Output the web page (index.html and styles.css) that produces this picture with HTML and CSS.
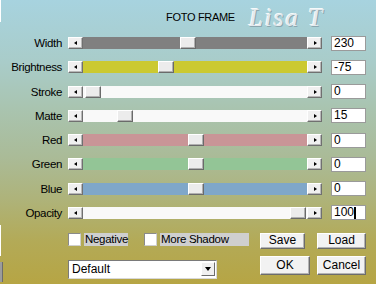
FILE: index.html
```html
<!DOCTYPE html>
<html>
<head>
<meta charset="utf-8">
<link rel="stylesheet" href="styles.css">
</head>
<body>
<div class="dialog">
  <div class="edge edge-top"></div>
  <div class="edge edge-bottom"></div>
  <div class="edge edge-box"></div>
  <header class="titlebar">
    <span class="title">FOTO FRAME</span>
    <span class="logo">Lisa T</span>
  </header>
  <section class="rows">
    <div class="row"><label class="lbl">Width</label>
      <div class="slider"><span class="sbtn left"></span><div class="track t-gray"><span class="thumb" style="left:97px"></span></div><span class="sbtn right"></span></div>
      <div class="val">230</div></div>
    <div class="row"><label class="lbl">Brightness</label>
      <div class="slider"><span class="sbtn left"></span><div class="track t-yellow"><span class="thumb" style="left:75px"></span></div><span class="sbtn right"></span></div>
      <div class="val">-75</div></div>
    <div class="row"><label class="lbl">Stroke</label>
      <div class="slider"><span class="sbtn left"></span><div class="track t-white"><span class="thumb" style="left:2px"></span></div><span class="sbtn right"></span></div>
      <div class="val">0</div></div>
    <div class="row"><label class="lbl">Matte</label>
      <div class="slider"><span class="sbtn left"></span><div class="track t-white"><span class="thumb" style="left:34px"></span></div><span class="sbtn right"></span></div>
      <div class="val">15</div></div>
    <div class="row"><label class="lbl">Red</label>
      <div class="slider"><span class="sbtn left"></span><div class="track t-red"><span class="thumb" style="left:105px"></span></div><span class="sbtn right"></span></div>
      <div class="val">0</div></div>
    <div class="row"><label class="lbl">Green</label>
      <div class="slider"><span class="sbtn left"></span><div class="track t-green"><span class="thumb" style="left:105px"></span></div><span class="sbtn right"></span></div>
      <div class="val">0</div></div>
    <div class="row"><label class="lbl">Blue</label>
      <div class="slider"><span class="sbtn left"></span><div class="track t-blue"><span class="thumb" style="left:105px"></span></div><span class="sbtn right"></span></div>
      <div class="val">0</div></div>
    <div class="row"><label class="lbl">Opacity</label>
      <div class="slider"><span class="sbtn left"></span><div class="track t-white"><span class="thumb" style="left:207px"></span></div><span class="sbtn right"></span></div>
      <div class="val">100<span class="caret"></span></div></div>
  </section>
  <section class="bottom">
    <div class="brow">
      <div class="checks">
        <span class="chk"></span><span class="clabel neg">Negative</span>
        <span class="chk chk2"></span><span class="clabel more">More Shadow</span>
      </div>
      <div class="btns">
        <button class="btn save">Save</button>
        <button class="btn load">Load</button>
      </div>
    </div>
    <div class="brow brow2">
      <div class="combo"><span class="ctext">Default</span><span class="cbtn"></span></div>
      <div class="btns">
        <button class="btn big ok">OK</button>
        <button class="btn big cancel">Cancel</button>
      </div>
    </div>
  </section>
</div>
</body>
</html>
```
FILE: styles.css
```css
* { box-sizing: border-box; }
html, body { margin: 0; padding: 0; }
body {
  width: 376px;
  height: 284px;
  overflow: hidden;
  font-family: "Liberation Sans", Arial, sans-serif;
  font-size: 11.5px;
  color: #000;
}
.dialog {
  position: relative;
  width: 376px;
  height: 284px;
  background: linear-gradient(180deg, #a7d3df 0%, #a9ccc9 22%, #a9c4b0 38%, #aabb98 55%, #aeb37a 70%, #b3aa57 85%, #b6a544 100%);
}
.edge { position: absolute; left: 0; }
.edge-top { top: 0; width: 1px; height: 22px; background: #ffffff; }
.edge-bottom { top: 225px; width: 1px; height: 31px; background: #ffffff; }
.edge-box { top: 262px; width: 3px; height: 20px; background: #9c9c9c; border-right: 1px solid #6c6c6c; }

.titlebar {
  height: 36px;
  display: flex;
  align-items: flex-start;
  padding-left: 166px;
}
.title {
  margin-top: 11px;
  font-size: 11px;
  letter-spacing: -0.3px;
  line-height: 13px;
}
.logo {
  margin-left: 14px;
  margin-top: 5px;
  font-family: "Liberation Serif", serif;
  font-style: italic;
  font-size: 25px;
  line-height: 25px;
  letter-spacing: 2px;
  color: #e4eaee;
  text-shadow: 1px 1px 0 #8aa6ae, -1px -1px 0 #f6fafb;
}

.rows {
  display: flex;
  flex-direction: column;
  gap: 10.29px;
}
.row {
  display: flex;
  align-items: center;
  height: 14px;
}
.lbl {
  width: 62px;
  text-align: right;
  margin-right: 6px;
  line-height: 14px;
  letter-spacing: -0.35px;
}
.slider {
  display: flex;
  width: 254px;
  height: 12px;
}
.sbtn {
  position: relative;
  width: 15px;
  height: 12px;
  background: #f0f0f0;
  border-top: 1px solid #ffffff;
  border-left: 1px solid #ffffff;
  border-right: 1px solid #707070;
  border-bottom: 1px solid #707070;
  box-shadow: inset -1px -1px 0 #b8b8b8;
  flex: none;
}
.sbtn::after {
  content: "";
  position: absolute;
  top: 3px;
  width: 0;
  height: 0;
  border-top: 2.5px solid transparent;
  border-bottom: 2.5px solid transparent;
}
.sbtn.left::after { left: 5px; border-right: 3px solid #000; }
.sbtn.right::after { left: 6px; border-left: 3px solid #000; }
.track {
  position: relative;
  flex: 1;
  height: 12px;
}
.t-gray { background: #808080; }
.t-yellow { background: #cbc931; }
.t-white { background: #f9f9f9; }
.t-red { background: #c99597; }
.t-green { background: #93c596; }
.t-blue { background: #7fa7c9; }
.thumb {
  position: absolute;
  top: 0;
  width: 16px;
  height: 12px;
  background: #ececec;
  border-top: 1px solid #ffffff;
  border-left: 1px solid #ffffff;
  border-right: 1px solid #6a6a6a;
  border-bottom: 1px solid #6a6a6a;
  box-shadow: inset -1px -1px 0 #b0b0b0;
}
.val {
  margin-left: 9px;
  width: 35px;
  height: 15px;
  background: #ffffff;
  border: 1px solid #9a9a9a;
  padding-left: 2px;
  line-height: 13px;
  font-size: 12px;
  display: flex;
  align-items: center;
}
.caret {
  display: inline-block;
  width: 2px;
  height: 12px;
  background: #000;
}

.bottom {
  margin-top: 13px;
  padding-left: 68px;
  display: flex;
  flex-direction: column;
  gap: 7px;
}
.brow {
  display: flex;
  align-items: flex-start;
  height: 16px;
}
.brow2 { height: 19px; }
.checks {
  display: flex;
  align-items: center;
  width: 192px;
  height: 13px;
}
.chk {
  width: 13px;
  height: 13px;
  background: #ffffff;
  border-top: 1px solid #8a8a8a;
  border-left: 1px solid #8a8a8a;
  border-right: 1px solid #d0d0d0;
  border-bottom: 1px solid #d0d0d0;
  flex: none;
}
.chk2 { margin-left: 16px; }
.clabel {
  margin-left: 3px;
  height: 13px;
  line-height: 13px;
  background: #cfcfcf;
  padding-left: 1px;
  letter-spacing: -0.3px;
  font-size: 11.5px;
  white-space: nowrap;
}
.neg { width: 44px; }
.more { width: 89px; }
.btns {
  display: flex;
  gap: 12px;
}
.btn {
  font-family: "Liberation Sans", Arial, sans-serif;
  font-size: 12px;
  color: #000;
  height: 16px;
  padding: 0;
  line-height: 13px;
  background: #f2f2f2;
  border-top: 1px solid #ffffff;
  border-left: 1px solid #ffffff;
  border-right: 1px solid #6c6c6c;
  border-bottom: 1px solid #6c6c6c;
  box-shadow: inset -1px -1px 0 #b4b4b4;
  border-radius: 0;
}
.save { width: 45px; }
.load { width: 49px; }
.big { height: 19px; line-height: 16px; }
.ok { width: 50px; }
.cancel { width: 49px; margin-left: -5px; }
.combo {
  margin-top: 4px;
  width: 149px;
  height: 19px;
  margin-right: 43px;
  background: #ffffff;
  border-top: 1px solid #7a7a7a;
  border-left: 1px solid #7a7a7a;
  border-right: 1px solid #d8d8d8;
  border-bottom: 1px solid #d8d8d8;
  display: flex;
  align-items: center;
  justify-content: space-between;
  padding-left: 3px;
  padding-right: 1px;
}
.ctext { font-size: 12px; line-height: 13px; }
.cbtn {
  position: relative;
  width: 14px;
  height: 14px;
  background: #f0f0f0;
  border-top: 1px solid #ffffff;
  border-left: 1px solid #ffffff;
  border-right: 1px solid #6c6c6c;
  border-bottom: 1px solid #6c6c6c;
}
.cbtn::after {
  content: "";
  position: absolute;
  left: 3px;
  top: 4px;
  border-left: 3.5px solid transparent;
  border-right: 3.5px solid transparent;
  border-top: 4px solid #000;
}
```
